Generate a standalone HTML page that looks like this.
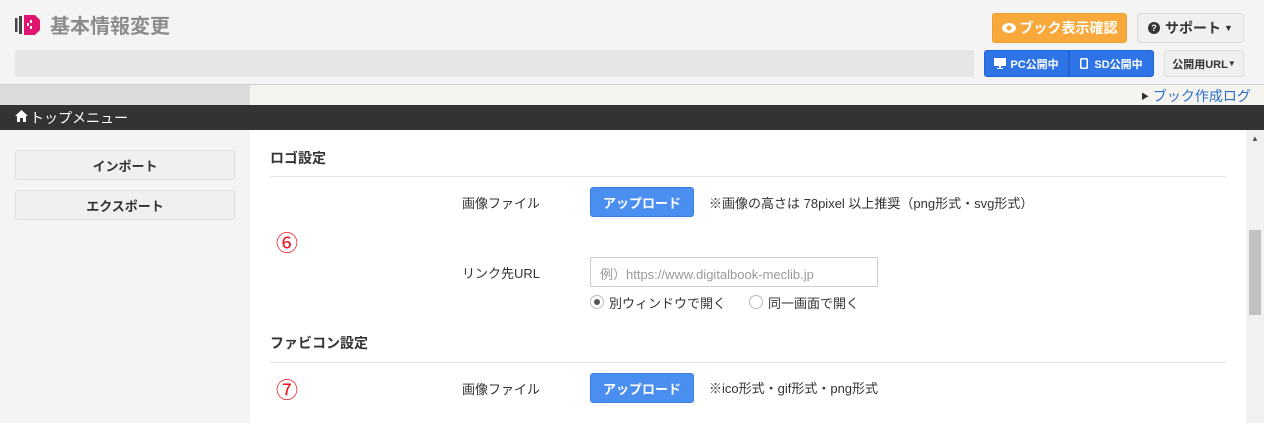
<!DOCTYPE html>
<html><head><meta charset="utf-8"><style>
*{margin:0;padding:0;box-sizing:border-box}
body{width:1264px;height:423px;overflow:hidden;background:#f4f4f4;font-family:"Liberation Sans","Noto Sans CJK JP",sans-serif;font-size:13px;color:#333;position:relative}
.a{position:absolute}
.btn{position:absolute;display:flex;align-items:center;justify-content:center;border-radius:3px;font-weight:bold}
</style></head><body>
<svg class="a" style="left:15px;top:14px" width="26" height="22" viewBox="0 0 26 22">
<rect x="0" y="4" width="2.5" height="14" fill="#444"/><rect x="4" y="2" width="3" height="18" fill="#444"/>
<path d="M9 1 L20 1 L25 6 L25 16 L20 21 L9 21 Z" fill="#e0156f"/>
<rect x="15" y="6" width="2" height="3" fill="#fff"/><rect x="15" y="12" width="2" height="3" fill="#fff"/><rect x="12" y="9" width="2" height="3" fill="#fff"/>
</svg>
<div class="a" style="left:50px;top:10px;font-size:20px;font-weight:bold;color:#8c8c8c">基本情報変更</div>
<div class="a" style="left:15px;top:50px;width:959px;height:27px;background:#e5e5e5;border-radius:2px"></div>

<div class="btn" style="left:992px;top:13px;width:135px;height:30px;background:#f9a93b;color:#fff;font-size:14px;border:1px solid #f0a030">
<svg width="14" height="10" viewBox="0 0 14 10" style="margin-right:4px"><ellipse cx="7" cy="5" rx="7" ry="5" fill="#fff"/><circle cx="7" cy="5" r="2.5" fill="#f9a93b"/></svg>ブック表示確認</div>
<div class="btn" style="left:1137px;top:13px;width:107px;height:30px;background:#f0f0f0;border:1px solid #ddd;color:#333;font-size:14px">
<span style="display:inline-block;width:12px;height:12px;border-radius:50%;background:#333;color:#fff;font-size:9px;line-height:12px;text-align:center;margin-right:5px">?</span>サポート<span style="font-size:9px;margin-left:3px">▼</span></div>
<div class="btn" style="left:984px;top:50px;width:85px;height:27px;background:#2f74e6;color:#fff;font-size:11px;border-radius:3px 0 0 3px;border:1px solid #1f63d5">
<svg width="12" height="11" viewBox="0 0 12 11" style="margin-right:4px"><rect x="0" y="0" width="12" height="8" fill="#fff"/><rect x="5" y="8" width="2" height="2" fill="#fff"/><rect x="3" y="10" width="6" height="1" fill="#fff"/></svg>PC公開中</div>
<div class="btn" style="left:1069px;top:50px;width:85px;height:27px;background:#2f74e6;color:#fff;font-size:11px;border-radius:0 3px 3px 0;border:1px solid #1f63d5">
<svg width="8" height="11" viewBox="0 0 8 11" style="margin-right:6px"><rect x="0.75" y="0.75" width="6.5" height="9.5" rx="1" fill="none" stroke="#fff" stroke-width="1.5"/></svg>SD公開中</div>
<div class="btn" style="left:1164px;top:50px;width:80px;height:27px;background:#f0f0f0;border:1px solid #ddd;color:#333;font-size:11px">公開用URL<span style="font-size:8px">▼</span></div>

<div class="a" style="left:0;top:84px;width:1264px;height:1px;background:#ccc"></div>
<div class="a" style="left:0;top:85px;width:250px;height:20px;background:#dcdcdc"></div>
<div class="a" style="left:250px;top:85px;width:1014px;height:20px;background:#f5f4ef"></div>
<div class="a" style="left:1141px;top:86px;font-size:14px;color:#2a6fc9"><span style="color:#333;font-size:8px;vertical-align:2px">▶</span> ブック作成ログ</div>

<div class="a" style="left:0;top:105px;width:1264px;height:25px;background:#333"></div>
<svg class="a" style="left:15px;top:110px" width="13" height="12" viewBox="0 0 13 12"><path d="M6.5 0 L13 6 L11 6 L11 12 L8 12 L8 8 L5 8 L5 12 L2 12 L2 6 L0 6 Z" fill="#fff"/></svg>
<div class="a" style="left:30px;top:108px;color:#fff;font-size:14px">トップメニュー</div>

<div class="btn" style="left:15px;top:150px;width:220px;height:30px;background:#f0f0f0;border:1px solid #ddd;font-size:13px;color:#333">インポート</div>
<div class="btn" style="left:15px;top:190px;width:220px;height:30px;background:#f0f0f0;border:1px solid #ddd;font-size:13px;color:#333">エクスポート</div>

<div class="a" style="left:250px;top:130px;width:996px;height:293px;background:#fff"></div>
<div class="a" style="left:1246px;top:130px;width:18px;height:293px;background:#f1f1f1"></div>
<div class="a" style="left:1249px;top:230px;width:12px;height:85px;background:#c1c1c1"></div>
<div class="a" style="left:1251px;top:134px;font-size:8px;color:#555">▲</div>

<div class="a" style="left:270px;top:148px;font-size:14px;font-weight:bold">ロゴ設定</div>
<div class="a" style="left:270px;top:176px;width:956px;height:1px;background:#e3e3e3"></div>
<div class="a" style="left:276px;top:226px;font-size:22px;color:#e8141c">⑥</div>
<div class="a" style="left:462px;top:193px;font-size:13px">画像ファイル</div>
<div class="btn" style="left:590px;top:187px;width:104px;height:30px;background:#4a8ef0;color:#fff;font-size:13px;border:1px solid #3b7fe3">アップロード</div>
<div class="a" style="left:709px;top:193px;font-size:13px">※画像の高さは 78pixel 以上推奨（png形式・svg形式）</div>
<div class="a" style="left:462px;top:263px;font-size:13px">リンク先URL</div>
<div class="a" style="left:590px;top:257px;width:288px;height:30px;border:1px solid #ccc;background:#fff;padding:6px 9px;font-size:13px;color:#999">例）https://www.digitalbook-meclib.jp</div>
<div class="a" style="left:590px;top:295px;width:14px;height:14px;border:1px solid #bbb;border-radius:50%;background:#fff"></div>
<div class="a" style="left:594px;top:299px;width:6px;height:6px;border-radius:50%;background:#555"></div>
<div class="a" style="left:609px;top:293px;font-size:13px">別ウィンドウで開く</div>
<div class="a" style="left:749px;top:295px;width:14px;height:14px;border:1px solid #bbb;border-radius:50%;background:#fff"></div>
<div class="a" style="left:768px;top:293px;font-size:13px">同一画面で開く</div>

<div class="a" style="left:270px;top:333px;font-size:14px;font-weight:bold">ファビコン設定</div>
<div class="a" style="left:270px;top:362px;width:956px;height:1px;background:#e3e3e3"></div>
<div class="a" style="left:276px;top:373px;font-size:22px;color:#e8141c">⑦</div>
<div class="a" style="left:462px;top:379px;font-size:13px">画像ファイル</div>
<div class="btn" style="left:590px;top:373px;width:104px;height:30px;background:#4a8ef0;color:#fff;font-size:13px;border:1px solid #3b7fe3">アップロード</div>
<div class="a" style="left:709px;top:378px;font-size:13px">※ico形式・gif形式・png形式</div>
</body></html>
